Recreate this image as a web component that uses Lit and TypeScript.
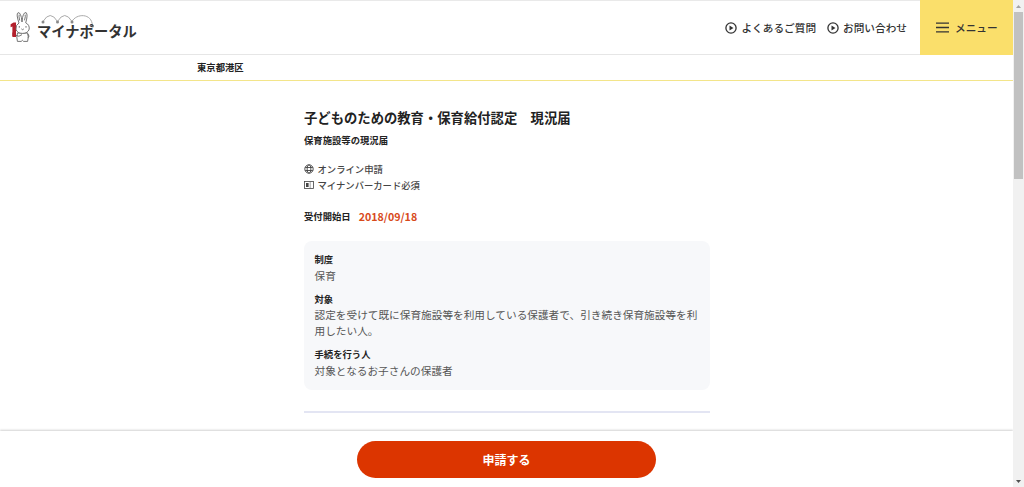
import { LitElement, html, css, svg } from 'lit';
import { customElement, property } from 'lit/decorators.js';

const playIcon = html`
  <svg class="play" viewBox="0 0 12 12" width="12" height="12">
    <circle cx="6" cy="6" r="5.1" fill="none" stroke="currentColor" stroke-width="1.3" />
    <path d="M4.5 3.5 8.5 6 4.5 8.5z" fill="currentColor" />
  </svg>
`;

const globeIcon = html`
  <svg viewBox="0 0 10 10" width="10" height="10" fill="none" stroke="currentColor" stroke-width="0.9">
    <circle cx="5" cy="5" r="4.2" />
    <ellipse cx="5" cy="5" rx="1.9" ry="4.2" />
    <path d="M1.2 3.5h7.6M1.2 6.5h7.6" />
  </svg>
`;

const cardIcon = html`
  <svg viewBox="0 0 10 10" width="10" height="10">
    <rect x="0.5" y="1.5" width="9" height="7" fill="none" stroke="currentColor" stroke-width="0.8" />
    <path d="M2 3h2.6v4H2z" fill="currentColor" />
    <path d="M6.2 2v6" stroke="currentColor" stroke-width="0.5" />
  </svg>
`;

@customElement('portal-logo')
export class PortalLogo extends LitElement {
  static styles = css`
    :host {
      display: flex;
      align-items: flex-start;
      width: 140px;
      height: 36px;
    }

    .rabbit {
      flex: none;
      width: 22px;
      height: 34px;
    }

    .word {
      display: flex;
      flex-direction: column;
      margin: 4px 0 0 5px;
    }

    .arcs {
      width: 62px;
      height: 14px;
    }

    .name {
      font-size: 14.3px;
      font-weight: 700;
      line-height: 16px;
      margin-top: -5px;
      white-space: nowrap;
      color: #333;
    }
  `;

  render() {
    const dots = [6, 20.5, 35];
    return html`
      <svg class="rabbit" viewBox="0 0 22 34">
        <path d="M.6 14.2 3.6 12.4H6V27H2.4V16.6L.6 17.2z" fill="#b3202c" />
        <g fill="#fff" stroke="#666" stroke-width="0.9" stroke-linejoin="round">
          <path d="M7.5 23Q6.2 27 7.4 31.4h3.8l1.2-1.1 1.2 1.1h4Q19 27 17.6 23z" />
          <path d="M9 13Q5.9 4 8 2.7 11.1 2 12 12 12.7 2 16.1 2.6 18.2 4.6 15.7 12.8 19.7 14.8 19.2 19.1 18 23.4 12.5 23.4 7 23.4 6 19.2 5.5 15 9 13z" />
          <path d="M9.7 10.5Q8.6 5.8 9.2 4.6M14.5 10.3Q15.8 5.8 15.1 4.6" fill="none" />
          <path d="M9.3 16v1.7M16 16v1.7M11.4 18.9l1.2.8 1.2-.8" fill="none" />
          <path d="M5.6 25.2Q9 27.6 12 24.6M18 24q2 2.4 0 3.8" fill="none" />
        </g>
        <path d="M2.4 22.5H6V26H2.4z" fill="#b3202c" />
      </svg>
      <div class="word">
        <svg class="arcs" viewBox="0 0 62 14">
          <path
            d="M6 7.5Q13.2-4.5 20.5 7.5 27.7-4.5 35 7.5C39-.5 55-1.5 55.5 12"
            fill="none"
            stroke="#aaa"
            stroke-width="1"
          />
          ${dots.map((x) => svg`<circle cx=${x} cy="8" r="1.5" fill="#888" />`)}
          <circle cx="55.5" cy="12" r="1.5" fill="#888" />
        </svg>
        <span class="name">マイナポータル</span>
      </div>
    `;
  }
}

@customElement('portal-header')
export class PortalHeader extends LitElement {
  static styles = css`
    :host {
      display: flex;
      align-items: stretch;
      box-sizing: border-box;
      height: 55px;
      border-top: 1px solid #e9e9e9;
      border-bottom: 1px solid #e6e6e6;
      background: #fff;
      color: #333;
    }

    portal-logo {
      margin: 9px 0 0 10px;
    }

    nav {
      display: flex;
      align-items: center;
      gap: 11px;
      margin-left: auto;
      padding-right: 13px;
    }

    .link {
      display: flex;
      align-items: center;
      gap: 4px;
      font-size: 10.67px;
      font-weight: 500;
      line-height: 16px;
      color: inherit;
      text-decoration: none;
    }

    .menu {
      display: flex;
      align-items: center;
      gap: 6px;
      box-sizing: border-box;
      width: 93px;
      margin: -1px 0;
      padding: 0 0 0 16px;
      border: 0;
      background: #fadf6b;
      color: #333;
      font: 500 10.67px/16px 'Noto Sans CJK JP', sans-serif;
      white-space: nowrap;
    }
  `;

  render() {
    return html`
      <portal-logo></portal-logo>
      <nav>
        <a class="link" href="#">${playIcon}<span>よくあるご質問</span></a>
        <a class="link" href="#">${playIcon}<span>お問い合わせ</span></a>
      </nav>
      <button class="menu">
        <svg viewBox="0 0 13 11" width="13" height="11">
          <path d="M0 1.2h13M0 5.5h13M0 9.8h13" stroke="currentColor" stroke-width="1.3" />
        </svg>
        <span>メニュー</span>
      </button>
    `;
  }
}

@customElement('detail-card')
export class DetailCard extends LitElement {
  @property({ attribute: false }) items: { term: string; text: string }[] = [];

  static styles = css`
    :host {
      display: block;
      box-sizing: border-box;
      height: 149px;
      padding: 10px 10.5px;
      border-radius: 8px;
      background: #f7f8fa;
    }

    dl {
      display: flex;
      flex-direction: column;
      gap: 7px;
      margin: 0;
    }

    dt {
      font-size: 9.33px;
      font-weight: 700;
      line-height: 16px;
      color: #222;
    }

    dd {
      margin: 0.5px 0 0;
      font-size: 10.67px;
      line-height: 16px;
      color: #555;
    }
  `;

  render() {
    return html`
      <dl>
        ${this.items.map(
          (item) => html`
            <div>
              <dt>${item.term}</dt>
              <dd>${item.text}</dd>
            </div>
          `
        )}
      </dl>
    `;
  }
}

@customElement('app-root')
export class AppRoot extends LitElement {
  details = [
    { term: '制度', text: '保育' },
    {
      term: '対象',
      text: '認定を受けて既に保育施設等を利用している保護者で、引き続き保育施設等を利用したい人。',
    },
    { term: '手続を行う人', text: '対象となるお子さんの保護者' },
  ];

  static styles = css`
    :host {
      display: flex;
      height: 487px;
      overflow: hidden;
      background: #fff;
      font-family: 'Noto Sans CJK JP', sans-serif;
      color: #222;
    }

    .page {
      display: flex;
      flex-direction: column;
      width: 1013px;
      height: 487px;
    }

    .region {
      box-sizing: border-box;
      height: 26px;
      padding-left: 197px;
      border-bottom: 1px solid #f3e58a;
      font-size: 9.33px;
      font-weight: 700;
      line-height: 25px;
    }

    main {
      flex: 1;
      min-height: 0;
      width: 406px;
      margin-left: 304px;
    }

    h1 {
      margin: 27px 0 0;
      font-size: 13.33px;
      font-weight: 700;
      line-height: 20px;
      white-space: nowrap;
    }

    h2 {
      margin: 4px 0 0;
      font-size: 9.33px;
      font-weight: 700;
      line-height: 16px;
    }

    .tags {
      margin: 13px 0 0;
      padding: 0;
      list-style: none;
      font-size: 9.33px;
      font-weight: 500;
      line-height: 16px;
      color: #444;
    }

    .tags li {
      display: flex;
      align-items: center;
      gap: 3.5px;
    }

    .start {
      display: flex;
      align-items: center;
      gap: 8px;
      height: 16px;
      margin: 15px 0 17px;
      font-size: 9.33px;
      font-weight: 700;
    }

    .date {
      font-size: 10.67px;
      color: #d84a1b;
    }

    hr {
      height: 2px;
      margin: 20.5px 0 0;
      border: 0;
      background: #e3e5f3;
    }

    footer {
      display: flex;
      justify-content: center;
      align-items: center;
      box-sizing: border-box;
      height: 56px;
      padding-top: 1px;
      background: #fff;
      box-shadow: 0 -1px 2px rgba(0, 0, 0, 0.18);
    }

    .apply {
      width: 299px;
      height: 37px;
      border: 0;
      border-radius: 19px;
      background: #dc3500;
      color: #fff;
      font: 700 12px/18px 'Noto Sans CJK JP', sans-serif;
    }

    .scrollbar {
      display: flex;
      flex-direction: column;
      align-items: center;
      flex: 1;
      background: #f1f1f1;
    }

    .arrow {
      flex: none;
      width: 11px;
      height: 12px;
    }

    .thumb {
      width: 9px;
      height: 167px;
      margin-bottom: auto;
      background: #c1c1c1;
    }
  `;

  render() {
    return html`
      <div class="page">
        <portal-header></portal-header>
        <div class="region">東京都港区</div>
        <main>
          <h1>子どものための教育・保育給付認定　現況届</h1>
          <h2>保育施設等の現況届</h2>
          <ul class="tags">
            <li>${globeIcon}<span>オンライン申請</span></li>
            <li>${cardIcon}<span>マイナンバーカード必須</span></li>
          </ul>
          <div class="start">
            <span>受付開始日</span>
            <span class="date">2018/09/18</span>
          </div>
          <detail-card .items=${this.details}></detail-card>
          <hr />
        </main>
        <footer>
          <button class="apply">申請する</button>
        </footer>
      </div>
      <div class="scrollbar">
        <svg class="arrow" viewBox="0 0 11 12"><path d="M3 8 5.5 5 8 8z" fill="#a3a3a3" /></svg>
        <div class="thumb"></div>
        <svg class="arrow" viewBox="0 0 11 12"><path d="M3 5 5.5 8 8 5z" fill="#505050" /></svg>
      </div>
    `;
  }
}
